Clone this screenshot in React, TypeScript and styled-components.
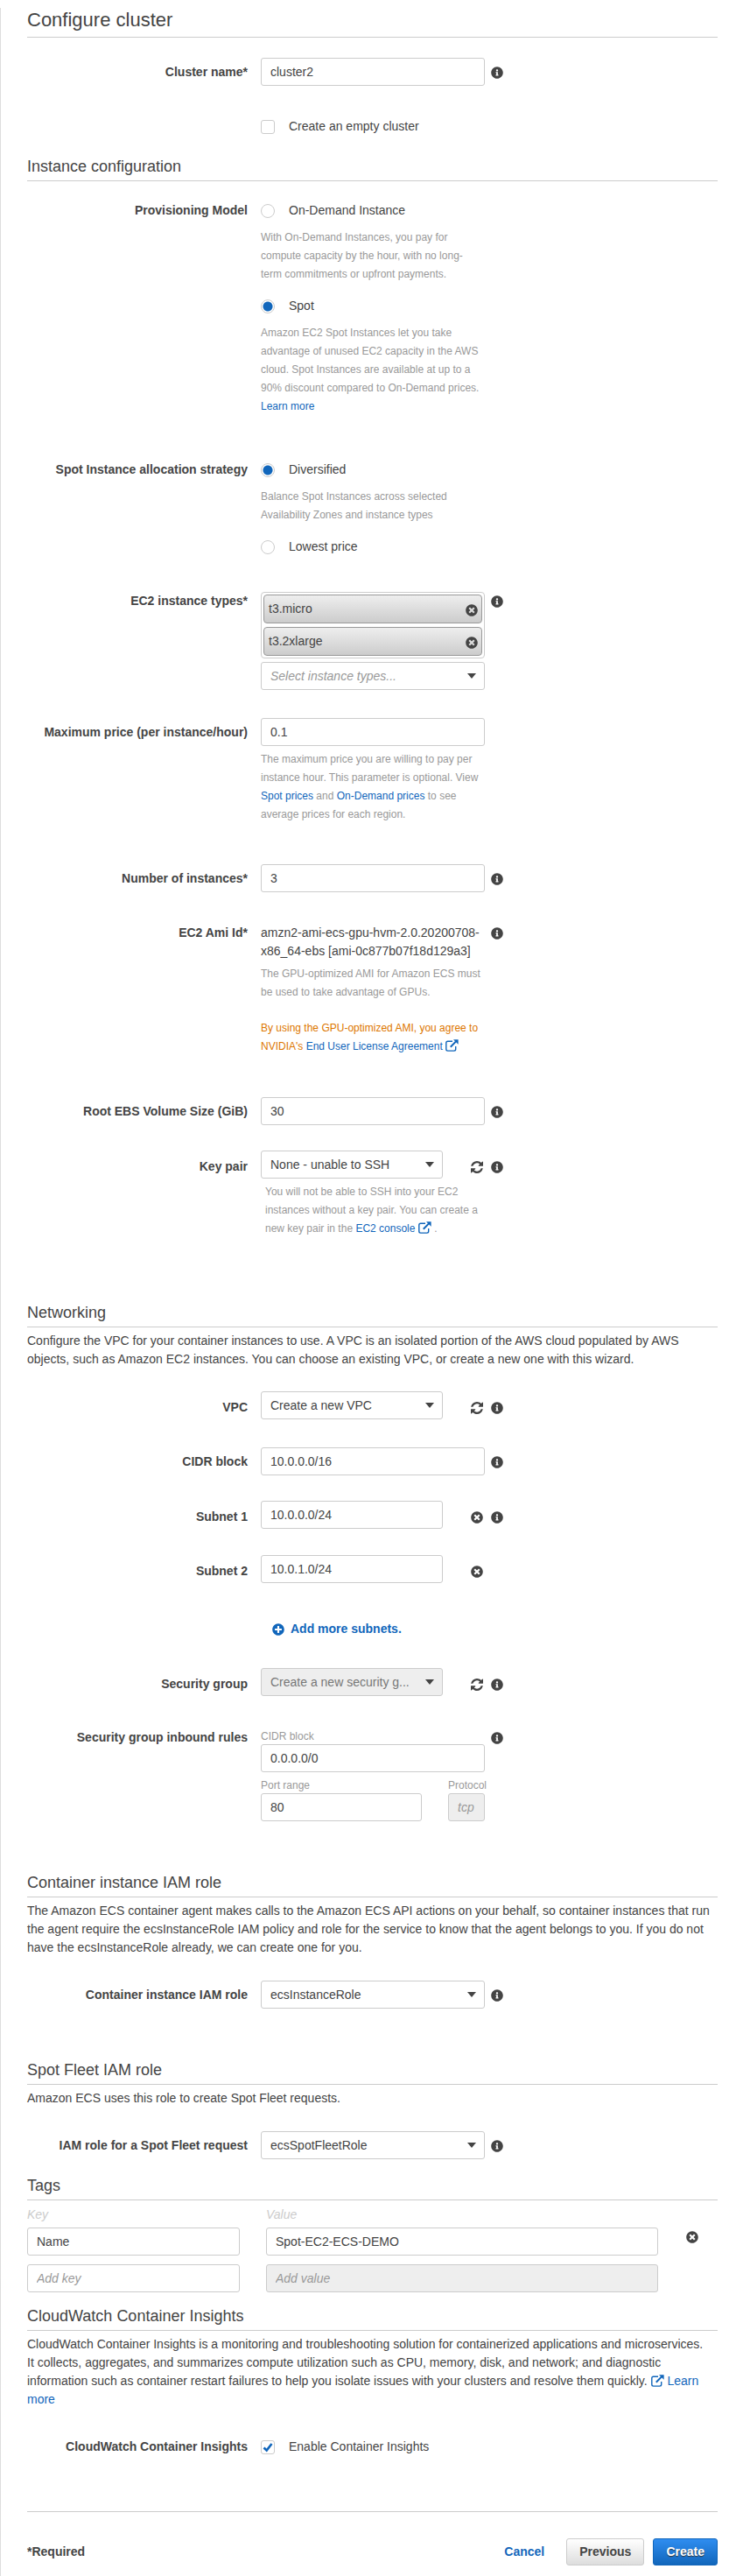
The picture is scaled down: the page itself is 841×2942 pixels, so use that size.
import React from 'react';
import styled, { createGlobalStyle, css } from 'styled-components';
import { FaInfoCircle, FaTimesCircle, FaPlusCircle } from 'react-icons/fa';

const GlobalStyle = createGlobalStyle`
  * { box-sizing: border-box; }
  body {
    margin: 0;
    background: #fff;
    color: #444;
    font: 14px/21px "Liberation Sans", Arial, Helvetica, sans-serif;
  }
  input, select, button { font: inherit; color: inherit; }
`;

const Page = styled.form`
  margin-top: 9px;
  padding: 0 21px 12px 30px;
  border-left: 1px solid #ddd;
`;

const Title = styled.h1`
  margin: 0;
  padding-bottom: 5px;
  border-bottom: 1px solid #ccc;
  font-size: 22px;
  line-height: 28px;
  font-weight: 400;
`;

const SectionTitle = styled.h2<{ $gap: number }>`
  margin: ${(p) => p.$gap}px 0 0;
  padding-bottom: 4px;
  border-bottom: 1px solid #ccc;
  font-size: 18px;
  line-height: 24px;
  font-weight: 400;
`;

const Intro = styled.p`
  margin: 5px 0 0;
`;

const Link = styled.a`
  color: #1166bb;
  text-decoration: none;
`;

type Align = 'text' | 'input' | 'select';
const alignPad: Record<Align, number> = { text: 0, input: 6, select: 8 };

const RowGrid = styled.div<{ $gap: number }>`
  display: grid;
  grid-template-columns: minmax(0, 267fr) minmax(0, 256fr) minmax(0, 266fr);
  margin-top: ${(p) => p.$gap}px;
`;

const LabelCell = styled.div<{ $align: Align }>`
  padding: ${(p) => alignPad[p.$align]}px 15px 0 0;
  font-weight: 700;
  text-align: right;
`;

const InfoCell = styled.div<{ $align: Align }>`
  padding: ${(p) => alignPad[p.$align]}px 0 0 7px;
`;

const IconButton = styled.button`
  display: flex;
  align-items: center;
  height: 21px;
  padding: 0;
  border: 0;
  background: none;
  cursor: pointer;
  svg { display: block; width: 14px; height: 14px; }
`;

const box = css`
  height: 32px;
  border: 1px solid #ccc;
  border-radius: 3px;
  background: #fff;
  padding: 0 10px;
`;

const TextInput = styled.input`
  ${box}
  display: block;
  width: 100%;
  min-width: 0;
  &::placeholder { color: #999; opacity: 1; font-style: italic; }
  &:disabled { background: #eee; }
`;

const SelectWrap = styled.div`
  display: grid;
  grid-template-columns: minmax(0, 1fr);
  align-items: center;
  flex: 1;
  min-width: 0;
  > * { grid-area: 1 / 1; }
  > svg { justify-self: end; margin-right: 10px; pointer-events: none; }
`;

const NativeSelect = styled.select<{ $hint?: boolean }>`
  ${box}
  width: 100%;
  appearance: none;
  padding-right: 30px;
  text-overflow: ellipsis;
  opacity: 1;
  ${(p) => p.$hint && 'color: #999; font-style: italic;'}
  &:disabled { background: #eee; color: #777; }
`;

const WithAction = styled.div`
  display: flex;
  gap: 32px;
  padding-right: 2px;
`;

const ActionSlot = styled.div`
  padding-top: 8px;
`;

const Help = styled.p<{ $gap?: number; $inset?: boolean; $warn?: boolean }>`
  margin: ${(p) => p.$gap ?? 5}px 0 0 ${(p) => (p.$inset ? 5 : 0)}px;
  font-size: 12px;
  color: ${(p) => (p.$warn ? '#dd7700' : '#999')};
`;

const Choice = styled.label<{ $gap?: number }>`
  display: flex;
  align-items: center;
  gap: 16px;
  height: 21px;
  margin-top: ${(p) => p.$gap ?? 0}px;
`;

const Radio = styled.input`
  appearance: none;
  flex: none;
  width: 16px;
  height: 16px;
  margin: 0;
  border: 1px solid #ccc;
  border-radius: 50%;
  background: #fff;
  &:checked { background: radial-gradient(circle, #1166bb 5px, #fff 6px); }
`;

const CheckWrap = styled.span`
  display: grid;
  place-items: center;
  width: 16px;
  height: 16px;
  > * { grid-area: 1 / 1; }
  > svg { pointer-events: none; }
`;

const CheckInput = styled.input`
  appearance: none;
  width: 16px;
  height: 16px;
  margin: 0;
  border: 1px solid #ccc;
  border-radius: 3px;
  background: #fff;
  & + svg { visibility: hidden; }
  &:checked + svg { visibility: visible; }
`;

const ChipBox = styled.ul`
  display: grid;
  gap: 4px;
  margin: 0 0 4px;
  padding: 2px;
  border: 1px solid #ccc;
  border-radius: 4px;
  list-style: none;
`;

const Chip = styled.li`
  display: flex;
  justify-content: space-between;
  align-items: center;
  height: 33px;
  padding: 0 4px 0 5px;
  border: 1px solid #999;
  border-radius: 4px;
  background: linear-gradient(#eee, #ccc);
`;

const ChipAction = styled.span`
  padding-top: 3px;
`;

const AddSubnet = styled.button`
  display: flex;
  align-items: center;
  gap: 7px;
  height: 21px;
  margin-left: 13px;
  padding: 0;
  border: 0;
  background: none;
  color: #1166bb;
  font-weight: 700;
  white-space: nowrap;
  cursor: pointer;
`;

const AmiId = styled.div`
  white-space: nowrap;
`;

const SmallLabel = styled.label`
  display: block;
  font-size: 12px;
  line-height: 18px;
  color: #999;
`;

const PortRow = styled.div`
  display: grid;
  grid-template-columns: minmax(0, 184fr) minmax(0, 42fr);
  column-gap: 30px;
  margin-top: 6px;
`;

const TagTable = styled.table`
  width: 100%;
  margin-top: 6px;
  border-collapse: collapse;
  table-layout: fixed;
  th {
    padding: 0 0 5px;
    line-height: 20px;
    font-weight: 400;
    font-style: italic;
    text-align: left;
    color: #ccc;
  }
  td { padding: 0 0 10px; vertical-align: top; }
  tr:last-child td { padding-bottom: 0; }
  th:first-child, td:first-child { width: 273px; padding-right: 30px; }
  th:last-child, td:last-child { width: 68px; padding-left: 32px; }
`;

const Footer = styled.footer`
  display: flex;
  align-items: center;
  gap: 10px;
  margin-top: 63px;
  padding-top: 30px;
  border-top: 1px solid #ccc;
  font-weight: 700;
`;

const Required = styled.span`
  margin-right: auto;
`;

const FooterButton = styled.button<{ $kind: 'link' | 'plain' | 'primary' }>`
  height: 31px;
  padding: 0 14px;
  border: 1px solid transparent;
  border-radius: 3px;
  font-weight: 700;
  cursor: pointer;
  ${(p) => p.$kind === 'link' && css`
    color: #1166bb;
    background: none;
  `}
  ${(p) => p.$kind === 'plain' && css`
    border-color: #ccc;
    background: linear-gradient(#fff, #ddd);
  `}
  ${(p) => p.$kind === 'primary' && css`
    color: #fff;
    border-color: #1166bb;
    background: linear-gradient(#2f8df0, #1166bb);
    text-shadow: 0 1px 1px #333;
  `}
`;

const ExternalSvg = styled.svg`
  width: 15px;
  height: 14px;
  vertical-align: -2px;
`;

function External() {
  return (
    <ExternalSvg viewBox="0 0 15 14" fill="none" stroke="#1166bb" aria-hidden="true">
      <path d="M8 2.2H2.6C1.5 2.2 .8 2.9 .8 4v7.3c0 1.1.7 1.8 1.8 1.8h7.3c1.1 0 1.8-.7 1.8-1.8V8" strokeWidth="1.4" />
      <path d="M5.8 8.8L12 2.4" strokeWidth="2" />
      <path d="M9 .2h5.600v5.600z" fill="#1166bb" stroke="none" />
    </ExternalSvg>
  );
}

function RefreshIcon() {
  return (
    <svg viewBox="0 0 1536 1536" fill="currentColor" aria-hidden="true">
      <path d="M1511 928q0 5-1 7-64 268-268 434.500T764 1536q-146 0-282.500-55T238 1324l-129 129q-19 19-45 19t-45-19-19-45V960q0-26 19-45t45-19h448q26 0 45 19t19 45-19 45l-137 137q71 66 161 102t187 36q134 0 250-65t186-179q11-17 53-117 8-23 30-23h192q13 0 22.500 9.500t9.500 22.500zm25-800v448q0 26-19 45t-45 19h-448q-26 0-45-19t-19-45 19-45l138-138Q969 256 768 256q-134 0-250 65T332 500q-11 17-53 117-8 23-30 23H50q-13 0-22.500-9.500T18 608v-7q65-268 270-434.500T768 0q146 0 284 55.500T1297 212l130-129q19-19 45-19t45 19 19 45z" />
    </svg>
  );
}

function Caret() {
  return (
    <svg width="10" height="6" viewBox="0 0 10 6" aria-hidden="true">
      <path d="M0 0h10L5 6z" fill="#444" />
    </svg>
  );
}

interface RowProps {
  gap: number;
  align?: Align;
  label?: string;
  htmlFor?: string;
  info?: boolean;
  children: React.ReactNode;
}

function Row({ gap, align = 'input', label, htmlFor, info, children }: RowProps) {
  return (
    <RowGrid $gap={gap}>
      <LabelCell $align={align}>
        {label && (htmlFor ? <label htmlFor={htmlFor}>{label}</label> : <span>{label}</span>)}
      </LabelCell>
      <div>{children}</div>
      <InfoCell $align={align}>
        {info && (
          <IconButton type="button" aria-label={`About ${label}`}>
            <FaInfoCircle />
          </IconButton>
        )}
      </InfoCell>
    </RowGrid>
  );
}

interface SelectProps {
  id: string;
  text: string;
  hint?: boolean;
  disabled?: boolean;
}

function Select({ id, text, hint, disabled }: SelectProps) {
  return (
    <SelectWrap>
      <NativeSelect id={id} $hint={hint} disabled={disabled}>
        <option>{text}</option>
      </NativeSelect>
      <Caret />
    </SelectWrap>
  );
}

function Action({ kind, name }: { kind: 'refresh' | 'remove'; name: string }) {
  return (
    <ActionSlot>
      <IconButton type="button" aria-label={name}>
        {kind === 'refresh' ? <RefreshIcon /> : <FaTimesCircle />}
      </IconButton>
    </ActionSlot>
  );
}

function Checkbox({ text, checked }: { text: string; checked?: boolean }) {
  return (
    <Choice>
      <CheckWrap>
        <CheckInput type="checkbox" defaultChecked={checked} />
        <svg width="12" height="12" viewBox="0 0 12 12" aria-hidden="true">
          <path d="M1.500 6.500L4.700 9.500L10.500 2" fill="none" stroke="#1166bb" strokeWidth="2.600" />
        </svg>
      </CheckWrap>
      {text}
    </Choice>
  );
}

export default function App() {
  return (
    <>
      <GlobalStyle />
      <Page onSubmit={(e) => e.preventDefault()}>
        <Title>Configure cluster</Title>
        <Row gap={23} label="Cluster name*" htmlFor="name" info>
          <TextInput id="name" defaultValue="cluster2" />
        </Row>
        <Row gap={36} align="text">
          <Checkbox text="Create an empty cluster" />
        </Row>

        <SectionTitle $gap={23}>Instance configuration</SectionTitle>
        <Row gap={23} align="text" label="Provisioning Model">
          <Choice>
            <Radio type="radio" name="model" />
            On-Demand Instance
          </Choice>
          <Help $gap={10}>
            With On-Demand Instances, you pay for compute capacity by the hour, with no long-
            <br />
            term commitments or upfront payments.
          </Help>
          <Choice $gap={15}>
            <Radio type="radio" name="model" defaultChecked />
            Spot
          </Choice>
          <Help $gap={10}>
            Amazon EC2 Spot Instances let you take advantage of unused EC2 capacity in the AWS
            cloud. Spot Instances are available at up to a 90% discount compared to On-Demand
            prices. <Link href="#spot">Learn more</Link>
          </Help>
        </Row>
        <Row gap={51} align="text" label="Spot Instance allocation strategy">
          <Choice>
            <Radio type="radio" name="strategy" defaultChecked />
            Diversified
          </Choice>
          <Help $gap={10}>Balance Spot Instances across selected Availability Zones and instance types</Help>
          <Choice $gap={15}>
            <Radio type="radio" name="strategy" />
            Lowest price
          </Choice>
        </Row>
        <Row gap={41} align="text" label="EC2 instance types*" htmlFor="types" info>
          <ChipBox>
            {['t3.micro', 't3.2xlarge'].map((type) => (
              <Chip key={type}>
                {type}
                <ChipAction>
                  <IconButton type="button" aria-label={`Remove ${type}`}>
                    <FaTimesCircle />
                  </IconButton>
                </ChipAction>
              </Chip>
            ))}
          </ChipBox>
          <Select id="types" text="Select instance types..." hint />
        </Row>
        <Row gap={32} label="Maximum price (per instance/hour)" htmlFor="price">
          <TextInput id="price" defaultValue="0.1" />
          <Help>
            The maximum price you are willing to pay per instance hour. This parameter is optional.
            View <Link href="#spot-prices">Spot prices</Link> and{' '}
            <Link href="#on-demand">On-Demand prices</Link> to see average prices for each region.
          </Help>
        </Row>
        <Row gap={46} label="Number of instances*" htmlFor="count" info>
          <TextInput id="count" defaultValue="3" />
        </Row>
        <Row gap={36} align="text" label="EC2 Ami Id*" info>
          <AmiId>
            amzn2-ami-ecs-gpu-hvm-2.0.20200708-
            <br />
            x86_64-ebs [ami-0c877b07f18d129a3]
          </AmiId>
          <Help>The GPU-optimized AMI for Amazon ECS must be used to take advantage of GPUs.</Help>
          <Help $gap={20} $warn>
            By using the GPU-optimized AMI, you agree to NVIDIA's{' '}
            <Link href="#eula">
              End User License Agreement <External />
            </Link>
          </Help>
        </Row>
        <Row gap={47} label="Root EBS Volume Size (GiB)" htmlFor="ebs" info>
          <TextInput id="ebs" defaultValue="30" />
        </Row>
        <Row gap={29} align="select" label="Key pair" htmlFor="key" info>
          <WithAction>
            <Select id="key" text="None - unable to SSH" />
            <Action kind="refresh" name="Refresh key pairs" />
          </WithAction>
          <Help $inset>
            You will not be able to SSH into your EC2 instances without a key pair. You can create a
            new key pair in the{' '}
            <Link href="#console">
              EC2 console <External />
            </Link>{' '}
            .
          </Help>
        </Row>

        <SectionTitle $gap={73}>Networking</SectionTitle>
        <Intro>
          Configure the VPC for your container instances to use. A VPC is an isolated portion of the
          AWS cloud populated by AWS objects, such as Amazon EC2 instances. You can choose an
          existing VPC, or create a new one with this wizard.
        </Intro>
        <Row gap={26} align="select" label="VPC" htmlFor="vpc" info>
          <WithAction>
            <Select id="vpc" text="Create a new VPC" />
            <Action kind="refresh" name="Refresh VPCs" />
          </WithAction>
        </Row>
        <Row gap={32} label="CIDR block" htmlFor="cidr" info>
          <TextInput id="cidr" defaultValue="10.0.0.0/16" />
        </Row>
        <Row gap={29} align="select" label="Subnet 1" htmlFor="subnet1" info>
          <WithAction>
            <TextInput id="subnet1" defaultValue="10.0.0.0/24" />
            <Action kind="remove" name="Remove subnet 1" />
          </WithAction>
        </Row>
        <Row gap={30} align="select" label="Subnet 2" htmlFor="subnet2">
          <WithAction>
            <TextInput id="subnet2" defaultValue="10.0.1.0/24" />
            <Action kind="remove" name="Remove subnet 2" />
          </WithAction>
        </Row>
        <Row gap={42} align="text">
          <AddSubnet type="button">
            <FaPlusCircle />
            Add more subnets.
          </AddSubnet>
        </Row>
        <Row gap={34} align="select" label="Security group" htmlFor="sg" info>
          <WithAction>
            <Select id="sg" text="Create a new security g..." disabled />
            <Action kind="refresh" name="Refresh security groups" />
          </WithAction>
        </Row>
        <Row gap={37} align="text" label="Security group inbound rules" info>
          <SmallLabel htmlFor="rule-cidr">CIDR block</SmallLabel>
          <TextInput id="rule-cidr" defaultValue="0.0.0.0/0" />
          <PortRow>
            <SmallLabel htmlFor="port">Port range</SmallLabel>
            <SmallLabel htmlFor="protocol">Protocol</SmallLabel>
            <TextInput id="port" defaultValue="80" />
            <TextInput id="protocol" placeholder="tcp" disabled />
          </PortRow>
        </Row>

        <SectionTitle $gap={58}>Container instance IAM role</SectionTitle>
        <Intro>
          The Amazon ECS container agent makes calls to the Amazon ECS API actions on your behalf,
          so container instances that run the agent require the ecsInstanceRole IAM policy and role
          for the service to know that the agent belongs to you. If you do not have the
          ecsInstanceRole already, we can create one for you.
        </Intro>
        <Row gap={27} label="Container instance IAM role" htmlFor="role" info>
          <Select id="role" text="ecsInstanceRole" />
        </Row>

        <SectionTitle $gap={58}>Spot Fleet IAM role</SectionTitle>
        <Intro>Amazon ECS uses this role to create Spot Fleet requests.</Intro>
        <Row gap={27} label="IAM role for a Spot Fleet request" htmlFor="fleet" info>
          <Select id="fleet" text="ecsSpotFleetRole" />
        </Row>

        <SectionTitle $gap={18}>Tags</SectionTitle>
        <TagTable>
          <thead>
            <tr>
              <th>Key</th>
              <th>Value</th>
              <th aria-label="Actions" />
            </tr>
          </thead>
          <tbody>
            <tr>
              <td><TextInput aria-label="Key" defaultValue="Name" /></td>
              <td><TextInput aria-label="Value" defaultValue="Spot-EC2-ECS-DEMO" /></td>
              <td>
                <IconButton type="button" aria-label="Remove tag">
                  <FaTimesCircle />
                </IconButton>
              </td>
            </tr>
            <tr>
              <td><TextInput aria-label="New key" placeholder="Add key" /></td>
              <td><TextInput aria-label="New value" placeholder="Add value" disabled /></td>
              <td />
            </tr>
          </tbody>
        </TagTable>

        <SectionTitle $gap={15}>CloudWatch Container Insights</SectionTitle>
        <Intro>
          CloudWatch Container Insights is a monitoring and troubleshooting solution for
          containerized applications and microservices.
          <br />
          It collects, aggregates, and summarizes compute utilization such as CPU, memory, disk, and
          network; and diagnostic
          <br />
          information such as container restart failures to help you isolate issues with your
          clusters and resolve them quickly.{' '}
          <Link href="#insights">
            <External /> Learn
            <br />
            more
          </Link>
        </Intro>
        <Row gap={33} align="text" label="CloudWatch Container Insights">
          <Checkbox text="Enable Container Insights" checked />
        </Row>

        <Footer>
          <Required>*Required</Required>
          <FooterButton type="button" $kind="link">Cancel</FooterButton>
          <FooterButton type="button" $kind="plain">Previous</FooterButton>
          <FooterButton type="submit" $kind="primary">Create</FooterButton>
        </Footer>
      </Page>
    </>
  );
}
